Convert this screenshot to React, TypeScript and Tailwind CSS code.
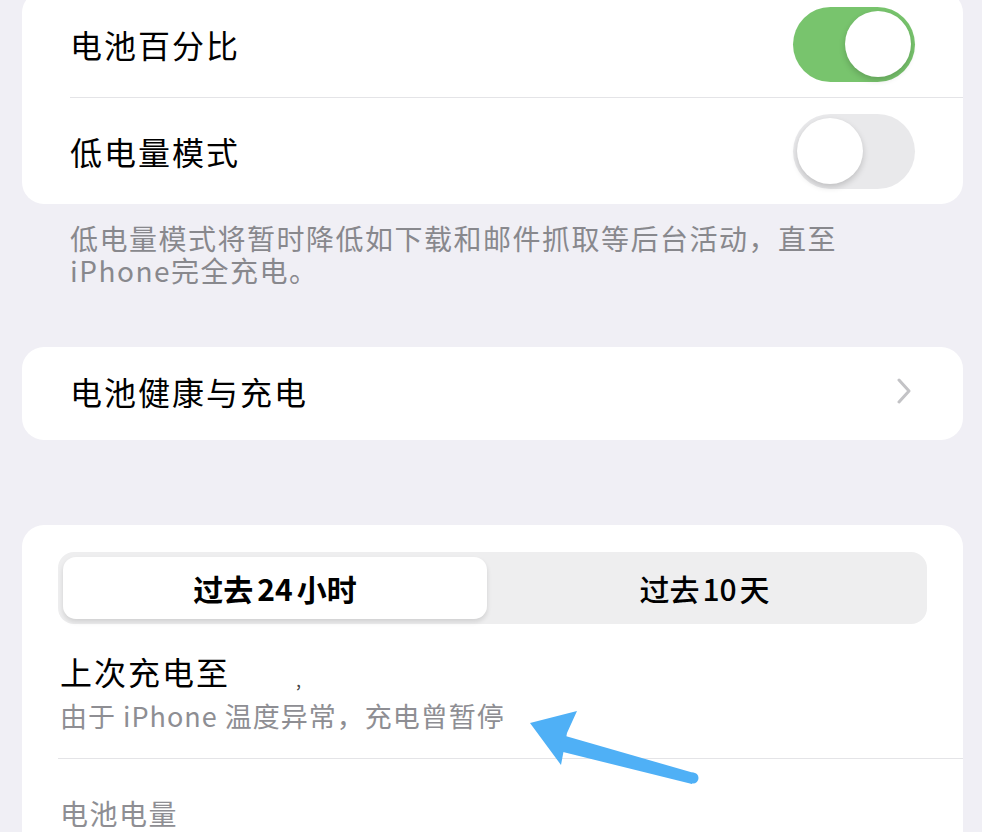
const font = { fontFamily: '"Noto Sans CJK SC", "Noto Sans", sans-serif' };

const Toggle = ({ on }: { on: boolean }) => {
  return (
    <div
      className={
        on
          ? 'flex h-[75px] w-[122px] items-center justify-end rounded-full bg-[#78c46d] px-[4px]'
          : 'flex h-[75px] w-[122px] items-center justify-start rounded-full bg-[#e9e9eb] px-[4px]'
      }
    >
      <div className="h-[66px] w-[66px] rounded-full bg-white shadow-[0_3px_6px_rgba(0,0,0,0.18)]" />
    </div>
  );
};

const App = () => {
  return (
    <div
      className="relative h-[832px] w-[982px] overflow-hidden bg-[#f0eff5] pl-[22px] pr-[19px] text-black"
      style={font}
    >
      {/* toggles card */}
      <div className="-mt-[9px] flex flex-col rounded-[22px] bg-white">
        <div className="flex h-[106px] items-center justify-between pl-[48px] pr-[48px]">
          <span className="text-[32px] tracking-[2px]">电池百分比</span>
          <Toggle on />
        </div>
        <div className="ml-[48px] h-px bg-[#e4e4e7]" />
        <div className="flex h-[106px] items-center justify-between pl-[48px] pr-[48px]">
          <span className="text-[32px] tracking-[2px]">低电量模式</span>
          <Toggle on={false} />
        </div>
      </div>

      <p className="mt-[18px] pl-[48px] pr-[100px] text-[28px] leading-[32px] tracking-[1.5px] text-[#88888d]">
        低电量模式将暂时降低如下载和邮件抓取等后台活动，直至iPhone完全充电。
      </p>

      {/* battery health */}
      <div className="mt-[61px] flex h-[93px] items-center justify-between rounded-[22px] bg-white pb-[6px] pl-[48px] pr-[48px]">
        <span className="text-[32px] tracking-[2px]">电池健康与充电</span>
        <svg width="14" height="26" viewBox="0 0 14 26" className="mr-[4px]">
          <polyline points="2,2 12,13 2,24" fill="none" stroke="#c3c3c6" strokeWidth="3" strokeLinecap="round" strokeLinejoin="round" />
        </svg>
      </div>

      {/* usage card */}
      <div className="mt-[85px] flex h-[400px] flex-col rounded-t-[22px] bg-white pt-[27px]">
        <div className="mx-[36px] flex h-[72px] items-center rounded-[16px] bg-[#eeeeef] p-[5px]">
          <div className="flex h-full w-[424px] items-center justify-center rounded-[13px] bg-white shadow-[0_3px_5px_rgba(0,0,0,0.12)] text-[30px] font-semibold">
            过去<span className="mx-[4px]">24</span>小时
          </div>
          <div className="flex h-full flex-1 items-center justify-center text-[30px] font-medium">
            过去<span className="mx-[3px]">10</span>天
          </div>
        </div>

        <div className="flex flex-col pl-[38px] pt-[24px]">
          <div className="flex items-end">
            <span className="text-[32px] leading-[46px] tracking-[2px]">上次充电至</span>
            <span className="ml-[66px] mb-[6px] text-[18px] leading-none text-[#444]">,</span>
          </div>
          <span className="mt-[2px] text-[27px] leading-[40px] tracking-[1px] text-[#8e8e93]">
            由于 iPhone 温度异常，充电曾暂停
          </span>
        </div>
        <div className="ml-[36px] mt-[22px] h-px bg-[#e4e4e7]" />
        <span className="mt-[34px] pl-[38px] text-[28px] leading-[40px] tracking-[1.5px] text-[#8e8e93]">
          电池电量
        </span>
      </div>

      {/* annotation arrow */}
      <svg className="pointer-events-none absolute left-0 top-0" width="982" height="832" viewBox="0 0 982 832">
        <polygon points="530,723 577,711 567,733 561,765" fill="#4fb0f6" />
        <polygon points="562,735 694,773 692,784 559,751" fill="#4fb0f6" />
        <circle cx="693" cy="778" r="5.5" fill="#4fb0f6" />
      </svg>
    </div>
  );
};

export default App;
